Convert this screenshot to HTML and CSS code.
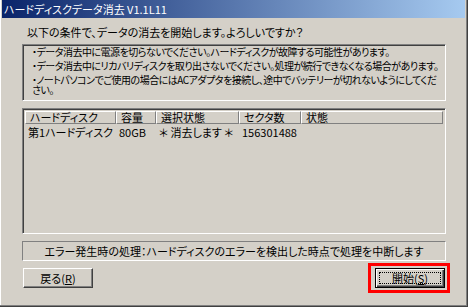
FILE: index.html
```html
<!DOCTYPE html>
<html lang="ja">
<head>
    <meta charset="UTF-8">
    <title>ハードディスクデータ消去</title>
    <link rel="stylesheet" href="styles.css">
</head>
<body>
<div class="window">
    <div class="titlebar">ハードディスクデータ消去 V1.1L11</div>

    <div class="content">
        <p class="prompt">以下の条件で、データの消去を開始します。よろしいですか？</p>

        <div class="notice">
            <p>・データ消去中に電源を切らないでください。ハードディスクが故障する可能性があります。</p>
            <p>・データ消去中にリカバリディスクを取り出さないでください。処理が続行できなくなる場合があります。</p>
            <p>・ノートパソコンでご使用の場合にはACアダプタを接続し、途中でバッテリーが切れないようにしてくだ<br>さい。</p>
        </div>

        <div class="list">
            <div class="row head">
                <span class="c1">ハードディスク</span>
                <span class="c2">容量</span>
                <span class="c3">選択状態</span>
                <span class="c4">セクタ数</span>
                <span class="c5">状態</span>
            </div>
            <div class="row">
                <span class="c1">第1ハードディスク</span>
                <span class="c2">80GB</span>
                <span class="c3">＊ 消去します ＊</span>
                <span class="c4">156301488</span>
                <span class="c5"></span>
            </div>
        </div>

        <div class="errorbox">エラー発生時の処理：ハードディスクのエラーを検出した時点で処理を中断します</div>

        <div class="buttons">
            <button class="btn">戻る(<u>R</u>)</button>
            <span class="mark">
                <button class="btn default"><span class="focus">開始(<u>S</u>)</span></button>
            </span>
        </div>
    </div>
</div>
</body>
</html>
```

FILE: styles.css
```css
* {
    margin: 0;
    padding: 0;
    box-sizing: border-box;
}

body {
    background: #d4d0c8;
    font-family: "Noto Sans CJK JP", "Liberation Sans", sans-serif;
    font-size: 11px;
    font-feature-settings: "palt";
    color: #000;
}

.window {
    width: 468px;
    height: 307px;
    background: #d4d0c8;
    border-right: 1px solid #404040;
    border-bottom: 1px solid #404040;
    box-shadow: inset -1px -1px 0 #808080, inset 1px 0 0 #fff;
    padding: 0 2px 0 2px;
}

.titlebar {
    height: 18px;
    line-height: 18px;
    padding-left: 2px;
    color: #fff;
    font-size: 11px;
    background: linear-gradient(to right, #0a246a, #a6caf0);
}

.content {
    padding: 0 19px 0 20px;
}

.prompt {
    margin-top: 8px;
    padding-left: 5px;
    line-height: 12px;
}

.notice {
    margin-top: 6px;
    height: 57px;
    overflow: hidden;
    padding: 0 0 0 9px;
    border: 1px solid;
    border-color: #808080 #fff #fff #808080;
    box-shadow: inset 1px 1px 0 #404040;
}

.notice p {
    font-size: 10px;
    letter-spacing: -0.5px;
    white-space: nowrap;
    line-height: 10px;
    margin-top: 4px;
}

.notice p:first-child {
    margin-top: 2px;
}

.list {
    margin-top: 7px;
    height: 126px;
    overflow: hidden;
    padding: 2px 2px 0 2px;
    border: 1px solid;
    border-color: #808080 #fff #fff #808080;
    box-shadow: inset 1px 1px 0 #404040;
}

.row {
    display: flex;
    height: 13px;
    line-height: 13px;
}

.row span {
    padding-left: 3px;
    white-space: nowrap;
}

.head span {
    border-top: 1px solid #fff;
    border-left: 1px solid #fff;
    border-right: 1px solid #808080;
    border-bottom: 1px solid #808080;
    line-height: 11px;
    padding-left: 4px;
}

.row .c1 { width: 91px; }
.row .c2 { width: 40px; }
.row .c3 { width: 83px; }
.row .c4 { width: 62px; }
.row .c5 { width: 142px; }

.row + .row {
    margin-top: 2px;
}

.errorbox {
    margin-top: 7px;
    height: 20px;
    line-height: 18px;
    text-align: center;
    border: 1px solid;
    border-color: #808080 #fff #fff #808080;
}

.buttons {
    display: flex;
    justify-content: space-between;
    align-items: center;
    margin-top: 2px;
    padding-left: 1px;
    margin-right: -4px;
}

.btn {
    width: 70px;
    height: 20px;
    font: inherit;
    background: #d4d0c8;
    border: 1px solid;
    border-color: #fff #404040 #404040 #fff;
    box-shadow: inset -1px -1px 0 #808080;
}

.btn u {
    text-decoration: underline;
}

.default {
    border: 1px solid #000;
    box-shadow: inset 1px 1px 0 #fff, inset -1px -1px 0 #404040, inset -2px -2px 0 #808080;
    padding: 3px;
}

.focus {
    display: block;
    height: 12px;
    line-height: 11px;
    border: 1px dotted #000;
}

.mark {
    display: block;
    border: 3px solid #f00;
    padding: 2px 2px 2px 4px;
}
```
